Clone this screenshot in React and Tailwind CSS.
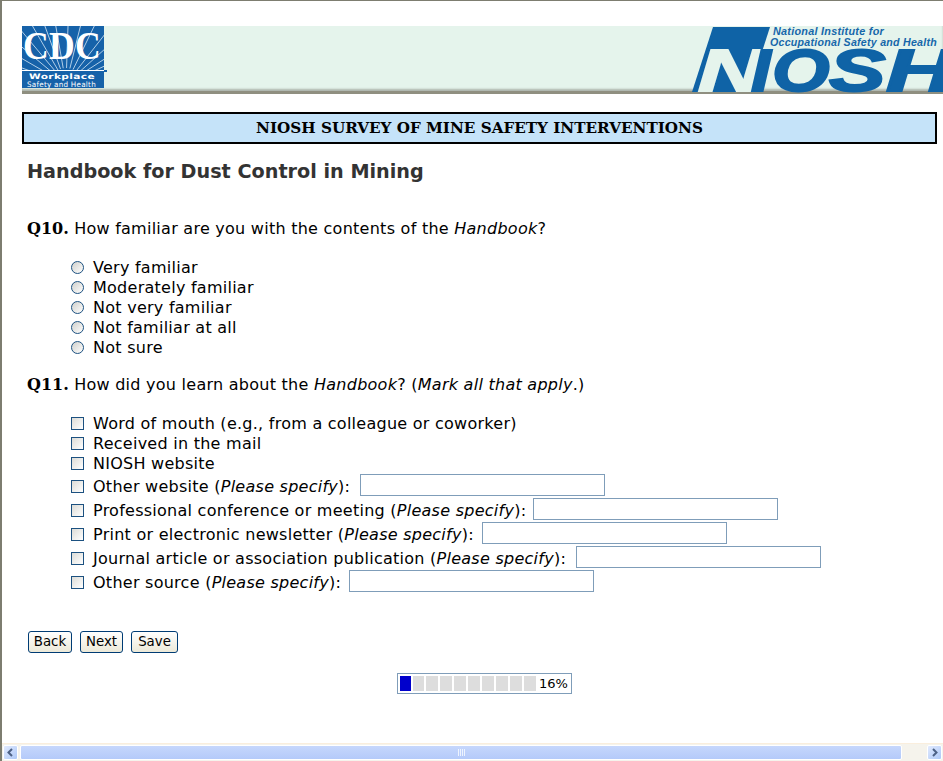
const sans = "font-['DejaVu_Sans',Verdana,sans-serif]";

function CdcLogo() {
  const cx = 44, cy = 58;
  const angles = [-172,-160,-150,-140,-130,-120,-110,-100,-88,-76,-64,-52,-42,-33,-25,-17,-10];
  return (
    <svg width="86" height="64" viewBox="0 0 86 64" className="shrink-0 block">
      <defs>
        <clipPath id="cdc-top"><rect width="82" height="44" /></clipPath>
      </defs>
      <rect width="82" height="62" fill="#1662a9" />
      <g clipPath="url(#cdc-top)">
        {angles.map((a) => {
          const r = (a * Math.PI) / 180;
          return (
            <line key={a} x1={cx + 16 * Math.cos(r)} y1={cy + 16 * Math.sin(r)} x2={cx + 110 * Math.cos(r)} y2={cy + 110 * Math.sin(r)} stroke="#c3daee" strokeWidth="0.9" />
          );
        })}
      </g>
      <text x="1" y="33" fontFamily="'Liberation Serif',serif" fontWeight="700" fontSize="40" fill="#fff" textLength="78" lengthAdjust="spacingAndGlyphs">CDC</text>
      <rect x="0" y="44" width="85" height="1" fill="#fff" />
      <rect x="82" y="44" width="3" height="2" fill="#1662a9" />
      <text x="7" y="53" fontFamily="'DejaVu Sans',sans-serif" fontWeight="700" fontSize="7.5" fill="#fff" textLength="66" lengthAdjust="spacingAndGlyphs">Workplace</text>
      <text x="5" y="60.5" fontFamily="'DejaVu Sans',sans-serif" fontWeight="400" fontSize="7.5" fill="#fff" textLength="69" lengthAdjust="spacingAndGlyphs">Safety and Health</text>
    </svg>
  );
}

function NioshLogo() {
  const blue = "#0f63a6";
  const big = { fontFamily: "'Liberation Sans',sans-serif", fontWeight: 700, fontStyle: "italic", fontSize: 60, strokeWidth: 2, lengthAdjust: "spacingAndGlyphs" };
  const small = { fontFamily: "'Liberation Sans',sans-serif", fontWeight: 700, fontStyle: "italic", fontSize: 11, fill: "#1667aa", lengthAdjust: "spacingAndGlyphs" };
  return (
    <svg width="251" height="67" viewBox="0 0 251 67" className="block shrink-0">
      <polygon points="0,66 21,1 78,1 57,66" fill={blue} />
      <text x="6" y="65" {...big} fill="#e5f4ec" stroke="#e5f4ec" textLength="66">N</text>
      <text x="59" y="65" {...big} fill={blue} stroke={blue} textLength="20">I</text>
      <text x="80" y="65" {...big} fill={blue} stroke={blue} textLength="58">O</text>
      <text x="137" y="65" {...big} fill={blue} stroke={blue} textLength="57">S</text>
      <text x="194" y="65" {...big} fill={blue} stroke={blue} textLength="68">H</text>
      <text x="81" y="9" {...small} textLength="111">National Institute for</text>
      <text x="78" y="19.5" {...small} textLength="167">Occupational Safety and Health</text>
    </svg>
  );
}

const boxClass = "appearance-none w-[13px] h-[13px] border border-[#1c5180] bg-gradient-to-br from-[#dcdcd7] to-[#ffffff] mr-[9px] shrink-0";

function Radio({ label }) {
  return (
    <label className="flex items-center h-5">
      <input type="radio" name="q10" className="appearance-none w-[13px] h-[13px] rounded-full border border-[#1c5180] bg-gradient-to-br from-[#d0d0cc] to-[#ffffff] mr-[9px] mb-[2px] shrink-0" />
      <span>{label}</span>
    </label>
  );
}

function Check({ label }) {
  return (
    <label className="flex items-center h-5">
      <input type="checkbox" className={`${boxClass} mb-[2px]`} />
      <span>{label}</span>
    </label>
  );
}

function SpecifyRow({ label, gap }) {
  return (
    <label className="flex items-center h-6">
      <input type="checkbox" className={boxClass} />
      <span className="pt-[2px]">{label} (<em>Please specify</em>):</span>
      <input type="text" className={`${gap} mb-[2px] w-[245px] h-[22px] border border-[#7f9db9] bg-white`} />
    </label>
  );
}

function Btn({ children, w }) {
  return (
    <button className={`h-[22px] ${w} rounded-[3px] border border-[#003c74] bg-gradient-to-b from-[#ffffff] to-[#ece9d8] text-[13.33px] leading-none text-black`}>
      {children}
    </button>
  );
}

function ScrollBtn({ dir }) {
  return (
    <div className="w-[15px] h-[15px] rounded-[2px] border border-white bg-gradient-to-br from-[#e1eafe] to-[#aec8f7] flex items-center justify-center shrink-0">
      <svg width="9" height="9" viewBox="0 0 9 9">
        <path d={dir === "l" ? "M6 1 L2.5 4.5 L6 8" : "M3 1 L6.5 4.5 L3 8"} fill="none" stroke="#4d6185" strokeWidth="2" />
      </svg>
    </div>
  );
}

export default function App() {
  return (
    <div className={`w-[943px] h-[761px] overflow-hidden flex flex-col bg-white border-t border-l-2 border-[#7d7d70] text-black text-[16px] tracking-[0.26px] ${sans}`}>
      <main className="flex-1 pl-5 pt-[25px] min-h-0">
        <header className="h-[68px] bg-[#e5f4ec] flex justify-between items-start border-b-[3px] border-[#8f8f80] shadow-[inset_0_-2px_2px_rgba(120,120,110,0.5)]">
          <CdcLogo />
          <NioshLogo />
        </header>

        <div className="mt-[18px] w-[915px] h-8 border-2 border-black bg-[#c5e3f9] flex items-center justify-center font-['DejaVu_Serif',serif] font-bold text-[15.2px] tracking-normal">
          NIOSH SURVEY OF MINE SAFETY INTERVENTIONS
        </div>

        <h1 className="ml-[5px] mt-[14px] text-[19.2px] leading-7 font-bold text-[#333333] tracking-normal">Handbook for Dust Control in Mining</h1>

        <p className="ml-[5px] mt-[33px] h-5 leading-5">
          <b className="font-['DejaVu_Serif',serif] tracking-normal">Q10.</b> How familiar are you with the contents of the <em>Handbook</em>?
        </p>

        <div className="ml-[49px] mt-[19px] flex flex-col">
          <Radio label="Very familiar" />
          <Radio label="Moderately familiar" />
          <Radio label="Not very familiar" />
          <Radio label="Not familiar at all" />
          <Radio label="Not sure" />
        </div>

        <p className="ml-[5px] mt-[17px] h-5 leading-5">
          <b className="font-['DejaVu_Serif',serif] tracking-normal">Q11.</b> How did you learn about the <em>Handbook</em>? (<em>Mark all that apply</em>.)
        </p>

        <div className="ml-[49px] mt-[19px] flex flex-col">
          <Check label="Word of mouth (e.g., from a colleague or coworker)" />
          <Check label="Received in the mail" />
          <Check label="NIOSH website" />
          <SpecifyRow label="Other website" gap="ml-[10px]" />
          <SpecifyRow label="Professional conference or meeting" gap="ml-[7px]" />
          <SpecifyRow label="Print or electronic newsletter" gap="ml-2" />
          <SpecifyRow label="Journal article or association publication" gap="ml-[10px]" />
          <SpecifyRow label="Other source" gap="ml-2" />
        </div>

        <div className="ml-[6px] mt-[37px] flex gap-2 tracking-normal">
          <Btn w="w-[44px]">Back</Btn>
          <Btn w="w-[43px]">Next</Btn>
          <Btn w="w-[47px]">Save</Btn>
        </div>

        <div className="ml-[375px] mt-5 w-[175px] h-[21px] border border-[#7f9db9] flex items-center pl-[2px] tracking-normal">
          <div className="flex gap-[2px]">
            <div className="w-[11px] h-[15px] bg-[#0000cc]" />
            <div className="w-[11px] h-[15px] bg-[#dddddd]" />
            {[0,1,2,3,4,5,6,7].map((i) => (
              <div key={i} className="w-[12px] h-[15px] bg-[#dddddd]" />
            ))}
          </div>
          <span className="ml-[3px] text-[13px] leading-none">16%</span>
        </div>
      </main>

      <div className="h-[18px] bg-[#f5f3ec] border-t border-[#faeedd] flex items-center pl-[1px] pr-[1px] gap-[2px]">
        <ScrollBtn dir="l" />
        <div className="w-[882px] h-[15px] rounded-[2px] border border-white bg-gradient-to-b from-[#c6d7fc] to-[#b4cafa] flex items-center justify-center gap-[1px]">
          {[0,1,2,3].map((i) => <span key={i} className="w-[1px] h-[7px] bg-[#eef4fe]" />)}
        </div>
        <div className="flex-1" />
        <ScrollBtn dir="r" />
      </div>
    </div>
  );
}
